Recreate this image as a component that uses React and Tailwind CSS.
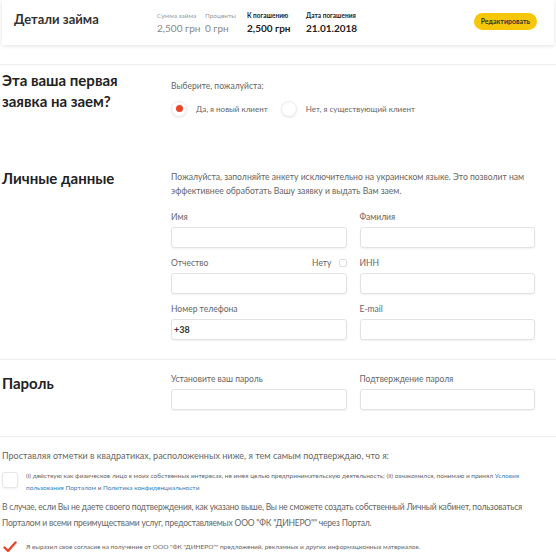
import React from "react";

const font = { fontFamily: "Lato, 'Noto Sans', sans-serif" };

function Stat({ label, value, strong }) {
  return (
    <div className="flex flex-col whitespace-nowrap">
      <span className={`text-[6.5px] leading-[10px] ${strong ? "font-bold text-[#222]" : "text-[#999]"}`}>{label}</span>
      <span className={`text-[10px] leading-[15px] ${strong ? "font-bold text-[#222]" : "text-[#888]"}`}>{value}</span>
    </div>
  );
}

function Field({ label, value, extra }) {
  return (
    <div className="flex flex-col">
      <div className="flex items-center justify-between h-[14px] mb-[3px]">
        <span className="text-[8.5px] text-[#666]">{label}</span>
        {extra}
      </div>
      <div className="h-[21px] rounded-[3px] border border-[#e2e2e2] bg-white shadow-[0_1px_2px_rgba(0,0,0,0.06)] flex items-center px-[2px]">
        {value && <span className="text-[9px] font-bold text-[#333]">{value}</span>}
      </div>
    </div>
  );
}

function Radio({ checked, label }) {
  return (
    <div className="flex items-center gap-[9px]">
      <div className="w-[16px] h-[16px] rounded-full border border-[#ececec] bg-white shadow-[0_1px_2px_rgba(0,0,0,0.08)] flex items-center justify-center">
        {checked && <div className="w-[7px] h-[7px] rounded-full bg-[#ec4529]" />}
      </div>
      <span className="text-[8px] text-[#666]">{label}</span>
    </div>
  );
}

export default function App() {
  return (
    <div className="w-[556px] h-[560px] bg-white overflow-hidden text-[#333]" style={font}>
      {/* Header */}
      <div className="mx-[2px] h-[45px] bg-white shadow-[0_1px_4px_rgba(0,0,0,0.12)] flex items-center pl-[12px] pr-[17px]">
        <span className="text-[13px] font-bold text-[#333] w-[143px] -mt-[5px]">Детали займа</span>
        <div className="flex mt-[1px]">
          <div className="w-[48px]"><Stat label="Сумма займа" value="2,500 грн" /></div>
          <div className="w-[42px]"><Stat label="Проценты" value="0 грн" /></div>
          <div className="w-[59px]"><Stat label="К погашению" value="2,500 грн" strong /></div>
          <div><Stat label="Дата погашения" value="21.01.2018" strong /></div>
        </div>
        <div className="ml-auto h-[17px] px-[7px] rounded-full bg-[#f6c708] flex items-center -mt-[3px]">
          <span className="text-[7px] font-bold text-[#333]">Редактировать</span>
        </div>
      </div>

      <div className="mt-[19px] border-t border-[#eeeeee]" />

      {/* Section 1 */}
      <div className="flex pl-[2px] pt-[5px] h-[93px]">
        <div className="w-[169px] text-[15px] leading-[21px] font-bold text-[#222]">
          Эта ваша первая<br />заявка на заем?
        </div>
        <div className="flex-1 pt-[10px]">
          <div className="text-[8.5px] text-[#666]">Выберите, пожалуйста:</div>
          <div className="flex gap-[13px] mt-[8px]">
            <Radio checked label="Да, я новый клиент" />
            <Radio label="Нет, я существующий клиент" />
          </div>
        </div>
      </div>

      {/* Section 2 */}
      <div className="flex pl-[2px] pt-[9px] pr-[21px] h-[201px]">
        <div className="w-[169px] text-[15px] leading-[21px] font-bold text-[#222] pt-[1px]">Личные данные</div>
        <div className="flex-1">
          <p className="text-[8.6px] leading-[14px] text-[#666] mt-[3px] pr-[8px]">
            Пожалуйста, заполняйте анкету исключительно на украинском языке. Это позволит нам эффективнее обработать Вашу заявку и выдать Вам заем.
          </p>
          <div className="grid grid-cols-2 gap-x-[13px] gap-y-[8px] mt-[12px]">
            <Field label="Имя" />
            <Field label="Фамилия" />
            <Field
              label="Отчество"
              extra={
                <div className="flex items-center gap-[7px]">
                  <span className="text-[8.5px] text-[#666]">Нету</span>
                  <div className="w-[8px] h-[8px] border border-[#ddd] rounded-[2px] bg-white" />
                </div>
              }
            />
            <Field label="ИНН" />
            <Field label="Номер телефона" value="+38" />
            <Field label="E-mail" />
          </div>
        </div>
      </div>

      <div className="border-t border-[#eeeeee]" />

      {/* Password */}
      <div className="flex pl-[2px] pr-[21px] pt-[13px] h-[76px]">
        <div className="w-[169px] text-[15px] leading-[21px] font-bold text-[#222]">Пароль</div>
        <div className="flex-1 grid grid-cols-2 gap-x-[13px] -mt-[1px]">
          <Field label="Установите ваш пароль" />
          <Field label="Подтверждение пароля" />
        </div>
      </div>

      <div className="border-t border-[#eeeeee]" />

      {/* Consent */}
      <div className="pl-[2px] pr-[14px] pt-[12px]">
        <p className="text-[9px] leading-[14px] text-[#666]">
          Проставляя отметки в квадратиках, расположенных ниже, я тем самым подтверждаю, что я:
        </p>
        <div className="flex gap-[8px] mt-[9px]">
          <div className="w-[16px] h-[16px] shrink-0 border border-[#e6e6e6] rounded-[3px] bg-white shadow-[0_1px_2px_rgba(0,0,0,0.06)]" />
          <p className="text-[6.5px] leading-[12px] text-[#666] -mt-[2px]">
            (i) действую как физическое лицо в моих собственных интересах, не имея целью предпринимательскую деятельность; (ii) ознакомился, понимаю и принял{" "}
            <span className="text-[#2f7fc1]">Условия</span>{" "}
            <span className="text-[#2f7fc1]">пользования Порталом</span> и{" "}
            <span className="text-[#2f7fc1]">Политика конфиденциальности</span>
          </p>
        </div>
        <p className="text-[8.5px] leading-[16px] tracking-[-0.2px] text-[#666] mt-[5px]">
          В случае, если Вы не даете своего подтверждения, как указано выше, Вы не сможете создать собственный Личный кабинет, пользоваться Порталом и всеми преимуществами услуг, предоставляемых ООО "ФК "ДИНЕРО"" через Портал.
        </p>
        <div className="flex items-center gap-[8px] mt-[8px]">
          <div className="w-[16px] h-[16px] shrink-0 flex items-center justify-center">
            <svg width="14" height="12" viewBox="0 0 14 12">
              <path d="M1.5 6.5 L5 10 L12.5 1.5" fill="none" stroke="#ec4529" strokeWidth="2.4" strokeLinecap="round" strokeLinejoin="round" />
            </svg>
          </div>
          <p className="text-[6.5px] text-[#666]">
            Я выразил свое согласие на получение от ООО "ФК "ДИНЕРО"" предложений, рекламных и других информационных материалов.
          </p>
        </div>
      </div>
    </div>
  );
}
